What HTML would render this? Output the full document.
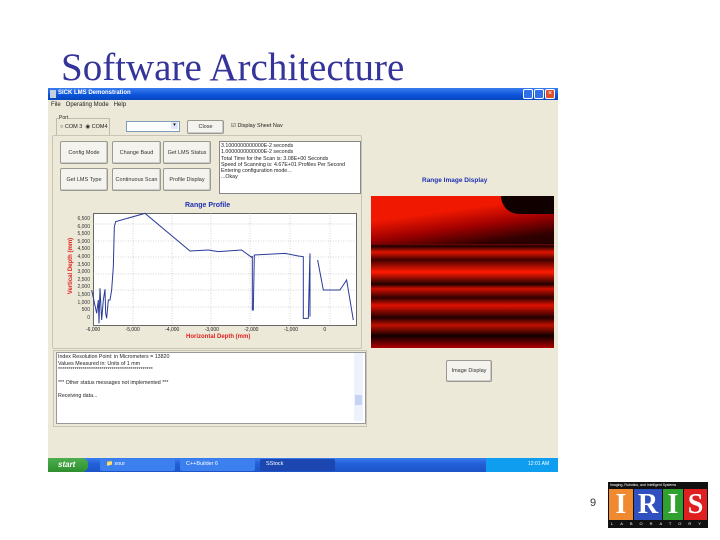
<!DOCTYPE html>
<html><head><meta charset="utf-8"><style>
body{margin:0;width:720px;height:540px;background:#fff;position:relative;overflow:hidden;font-family:"Liberation Sans",sans-serif}
.a{position:absolute}
.t{font-size:6px;color:#222;white-space:nowrap}
.btn{position:absolute;background:#f4f3ee;border:1px solid #9a9a90;border-radius:2px;font-size:5.5px;color:#333;display:flex;align-items:center;justify-content:center;box-shadow:inset -1px -1px 0 #ccc}
</style></head><body>
<div class="a" style="left:61px;top:45px;font-family:'Liberation Serif',serif;font-size:39px;color:#34349a;letter-spacing:0px">Software Architecture</div>

<!-- window -->
<div class="a" style="left:48px;top:88px;width:510px;height:370px;background:#ece9d8"></div>
<div class="a" style="left:48px;top:88px;width:510px;height:12px;background:linear-gradient(#3a7cf0,#0a52d8 60%,#0846c0)"></div>
<div class="a t" style="left:58px;top:90px;color:#fff;font-weight:bold;font-size:6px">SICK LMS Demonstration</div>
<div class="a" style="left:50px;top:90px;width:6px;height:8px;background:#c8d0e0"></div>
<div class="a" style="left:523px;top:89px;width:10px;height:10px;background:#2f6fe8;border:1px solid #fff;border-radius:2px;box-sizing:border-box"></div>
<div class="a" style="left:534px;top:89px;width:10px;height:10px;background:#2f6fe8;border:1px solid #fff;border-radius:2px;box-sizing:border-box"></div>
<div class="a" style="left:545px;top:89px;width:10px;height:10px;background:#e0502a;border:1px solid #fff;border-radius:2px;box-sizing:border-box;color:#fff;font-size:7px;line-height:8px;text-align:center">×</div>
<div class="a t" style="left:51px;top:102px">File&nbsp;&nbsp; Operating Mode&nbsp;&nbsp; Help</div>

<div class="a" style="left:56px;top:118px;width:52px;height:16px;border:1px solid #c0bdb0"></div>
<div class="a t" style="left:59px;top:115px;background:#ece9d8;font-size:5px">Port</div>
<div class="a t" style="left:60px;top:124px;font-size:5.5px">○ COM 3&nbsp; ◉ COM4</div>
<div class="a" style="left:126px;top:121px;width:52px;height:9px;background:#fff;border:1px solid #7f9db9"></div>
<div class="a" style="left:171px;top:122px;width:7px;height:7px;background:#dfe6f8;font-size:5px;text-align:center">▾</div>
<div class="btn" style="left:187px;top:120px;width:35px;height:12px">Close</div>
<div class="a t" style="left:231px;top:123px;font-size:5.5px">☑ Display Sheet Nav</div>

<div class="a" style="left:52px;top:135px;width:308px;height:212px;border:1px solid #c8c5b8;border-radius:2px"></div>
<div class="btn" style="left:60px;top:141px;width:46px;height:21px">Config Mode</div>
<div class="btn" style="left:112px;top:141px;width:47px;height:21px">Change Baud</div>
<div class="btn" style="left:163px;top:141px;width:46px;height:21px">Get LMS Status</div>
<div class="btn" style="left:60px;top:168px;width:46px;height:21px">Get LMS Type</div>
<div class="btn" style="left:112px;top:168px;width:47px;height:21px">Continuous Scan</div>
<div class="btn" style="left:163px;top:168px;width:46px;height:21px">Profile Display</div>
<div class="a" style="left:219px;top:141px;width:140px;height:51px;background:#fff;border:1px solid #888"></div>
<div class="a t" style="left:221px;top:143px;font-size:5.3px;line-height:6.3px">3.1000000000000E-2 seconds<br>1.0000000000000E-2 seconds<br>Total Time for the Scan is: 3.08E+00 Seconds<br>Speed of Scanning is: 4.67E+01 Profiles Per Second<br>Entering configuration mode...<br>...Okay</div>

<div class="a" style="left:185px;top:202px;font-size:7px;font-weight:bold;color:#2030b0">Range Profile</div>
<div class="a" style="left:93px;top:213px;width:262px;height:111px;background:#fff;border:1px solid #666"></div>
<svg class="a" style="left:0;top:0" width="720" height="540">
<g stroke="#aaa" stroke-width="0.5" stroke-dasharray="1,1.5">
<line x1="133" y1="213" x2="133" y2="324"/><line x1="172" y1="213" x2="172" y2="324"/><line x1="211" y1="213" x2="211" y2="324"/><line x1="250" y1="213" x2="250" y2="324"/><line x1="290" y1="213" x2="290" y2="324"/><line x1="330" y1="213" x2="330" y2="324"/>
<line x1="93" y1="224" x2="355" y2="224"/><line x1="93" y1="241" x2="355" y2="241"/><line x1="93" y1="257" x2="355" y2="257"/><line x1="93" y1="274" x2="355" y2="274"/><line x1="93" y1="290" x2="355" y2="290"/><line x1="93" y1="307" x2="355" y2="307"/>
</g>
<g transform="translate(45,200) scale(0.3333)" fill="none" stroke="#2a3a9a" stroke-width="3">
<polyline points="140,270 155,340 160,300 162,370 165,265 170,360 175,300 180,268 182,340 185,355 190,300 195,300 200,270 205,200 208,80 212,65 300,40 435,153 490,150 520,155 590,150 620,172 622,168 622,330 625,330 628,165 720,160 760,168 775,170 775,355 790,355 795,160 795,350"/>
<polyline points="818,180 835,270 885,270 905,240 925,360"/>
</g>
</svg>
<div class="a" style="left:70px;top:216px;font-size:5px;color:#333;line-height:7.6px;text-align:right;width:20px">6,500<br>6,000<br>5,500<br>5,000<br>4,500<br>4,000<br>3,500<br>3,000<br>2,500<br>2,000<br>1,500<br>1,000<br>500<br>0</div>
<div class="a" style="left:36px;top:263px;transform:rotate(-90deg);font-size:6px;color:#e02020;font-weight:bold;white-space:nowrap;width:70px;text-align:center">Vertical Depth (mm)</div>
<div class="a t" style="left:86px;top:327px;font-size:5px;word-spacing:24px">-6,000 -5,000 -4,000 -3,000 -2,000 -1,000 0</div>
<div class="a" style="left:186px;top:334px;font-size:6px;color:#e02020;font-weight:bold">Horizontal Depth (mm)</div>

<div class="a" style="left:53px;top:350px;width:312px;height:75px;border:1px solid #c8c5b8"></div>
<div class="a" style="left:56px;top:352px;width:308px;height:70px;background:#fff;border:1px solid #999"></div>
<div class="a" style="left:354px;top:353px;width:9px;height:68px;background:#eef2fc"></div>
<div class="a" style="left:355px;top:395px;width:7px;height:10px;background:#c6d3f5"></div>
<div class="a t" style="left:58px;top:354px;font-size:5.3px;line-height:6.5px">Index Resolution Point: in Micrometers = 13820<br>Values Measured in: Units of 1 mm<br>**********************************************<br><br>*** Other status messages not implemented ***<br><br>Receiving data...</div>

<div class="a" style="left:422px;top:177px;font-size:6.5px;font-weight:bold;color:#2030b0">Range Image Display</div>
<div class="a" style="left:371px;top:196px;width:183px;height:152px;overflow:hidden;background:linear-gradient(#c00800 0%,#a00000 15%,#300000 25%,#d01000 30%,#200000 33%,#e01400 37%,#400000 42%,#ff1a00 50%,#200000 58%,#d01000 61%,#300000 67%,#e01000 72%,#200000 80%,#c01000 85%,#100000 92%,#b00000 100%)">
<div class="a" style="left:0;top:0;width:183px;height:48px;background:linear-gradient(172deg,#f01800 35%,#a00000 60%,#300000 85%,#200000 100%)"></div>
<div class="a" style="left:130px;top:0;width:60px;height:18px;background:#100000;border-radius:0 0 0 30px"></div>
</div>
<div class="btn" style="left:446px;top:360px;width:44px;height:20px">Image Display</div>

<!-- taskbar -->
<div class="a" style="left:48px;top:458px;width:510px;height:14px;background:linear-gradient(#3a7ef0,#2260d8 40%,#1d54c8)"></div>
<div class="a" style="left:48px;top:458px;width:40px;height:14px;background:linear-gradient(#4cae4c,#2f8f2f);border-radius:0 6px 6px 0;color:#fff;font-size:8px;font-style:italic;font-weight:bold;line-height:14px;text-indent:10px">start</div>
<div class="a" style="left:100px;top:459px;width:75px;height:12px;background:#3c80f0;border-radius:2px"></div>
<div class="a t" style="left:106px;top:461px;color:#fff;font-size:5.5px">📁 sour</div>
<div class="a" style="left:180px;top:459px;width:75px;height:12px;background:#3c80f0;border-radius:2px"></div>
<div class="a t" style="left:186px;top:461px;color:#fff;font-size:5.5px">C++Builder 6</div>
<div class="a" style="left:260px;top:459px;width:75px;height:12px;background:#1c46b0;border-radius:2px"></div>
<div class="a t" style="left:266px;top:461px;color:#fff;font-size:5.5px">SStock</div>
<div class="a" style="left:486px;top:458px;width:72px;height:14px;background:#0f9df0"></div>
<div class="a t" style="left:528px;top:461px;color:#fff;font-size:5px">12:01 AM</div>

<!-- logo -->
<div class="a" style="left:590px;top:497px;font-size:11px;color:#333">9</div>
<div class="a" style="left:608px;top:482px;width:100px;height:46px;background:#111"></div>
<div class="a t" style="left:610px;top:483px;color:#fff;font-size:3.5px">Imaging, Robotics, and Intelligent Systems</div>
<div class="a" style="left:609px;top:489px;width:24px;height:31px;background:#f08a30;color:#fff;font:bold 28px/31px 'Liberation Serif',serif;text-align:center">I</div>
<div class="a" style="left:634px;top:489px;width:28px;height:31px;background:#3050c0;color:#fff;font:bold 28px/31px 'Liberation Serif',serif;text-align:center">R</div>
<div class="a" style="left:663px;top:489px;width:20px;height:31px;background:#30a030;color:#fff;font:bold 28px/31px 'Liberation Serif',serif;text-align:center">I</div>
<div class="a" style="left:684px;top:489px;width:23px;height:31px;background:#e02020;color:#fff;font:bold 28px/31px 'Liberation Serif',serif;text-align:center">S</div>
<div class="a t" style="left:611px;top:521px;color:#fff;font-size:4px;letter-spacing:7px">LABORATORY</div>
</body></html>
